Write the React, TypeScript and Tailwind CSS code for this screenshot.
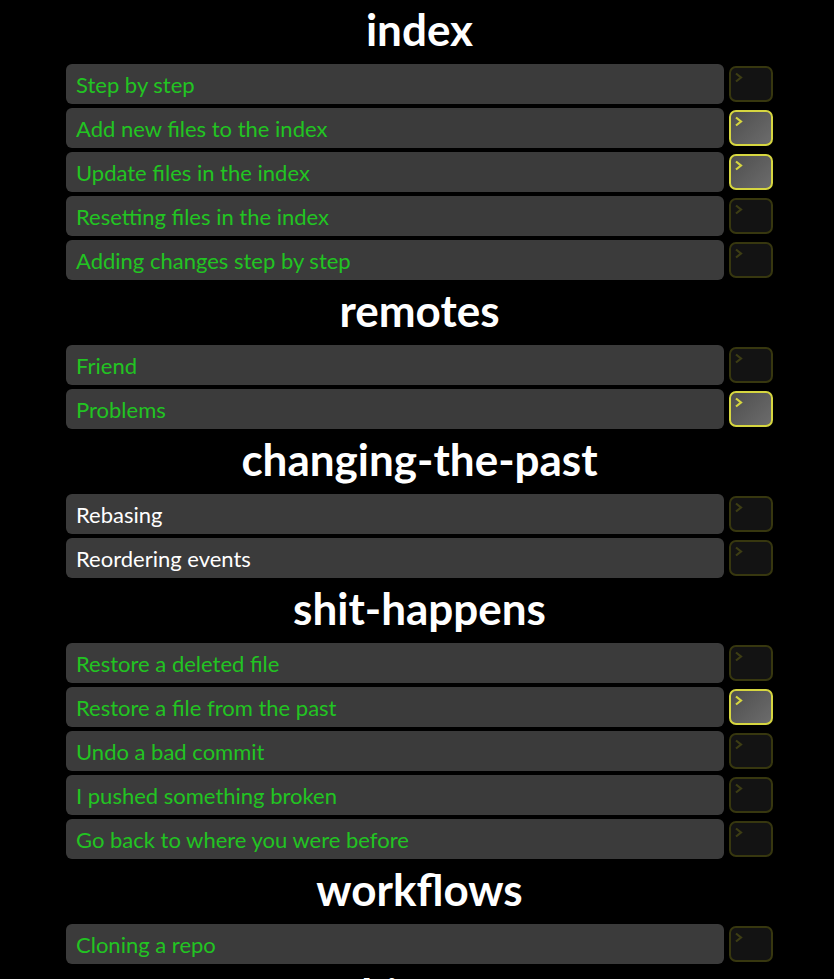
type Level = { title: string; done: boolean; active: boolean };
type Chapter = { name: string; levels: Level[] };

const CHAPTERS: Chapter[] = [
  {
    name: "index",
    levels: [
      { title: "Step by step", done: true, active: false },
      { title: "Add new files to the index", done: true, active: true },
      { title: "Update files in the index", done: true, active: true },
      { title: "Resetting files in the index", done: true, active: false },
      { title: "Adding changes step by step", done: true, active: false },
    ],
  },
  {
    name: "remotes",
    levels: [
      { title: "Friend", done: true, active: false },
      { title: "Problems", done: true, active: true },
    ],
  },
  {
    name: "changing-the-past",
    levels: [
      { title: "Rebasing", done: false, active: false },
      { title: "Reordering events", done: false, active: false },
    ],
  },
  {
    name: "shit-happens",
    levels: [
      { title: "Restore a deleted file", done: true, active: false },
      { title: "Restore a file from the past", done: true, active: true },
      { title: "Undo a bad commit", done: true, active: false },
      { title: "I pushed something broken", done: true, active: false },
      { title: "Go back to where you were before", done: true, active: false },
    ],
  },
  {
    name: "workflows",
    levels: [{ title: "Cloning a repo", done: true, active: false }],
  },
  {
    name: "bisect",
    levels: [{ title: "Yellow brick road", done: false, active: false }],
  },
];

function TerminalButton({ active }: { active: boolean }) {
  return (
    <button
      type="button"
      className={[
        "relative h-[36px] w-[44px] shrink-0 rounded-[7px] border-2",
        active
          ? "border-[#d6d640] bg-[linear-gradient(135deg,#4e4e4e,#6c6c6c)]"
          : "border-[#37370f] bg-[#131313]",
      ].join(" ")}
    >
      <svg
        viewBox="0 0 8 10"
        className="absolute left-[4px] top-[4px] h-[11px] w-[8px]"
        fill="none"
        stroke={active ? "#d6d640" : "#3d3d14"}
        strokeWidth="2.2"
      >
        <path d="M1 1 L6 5 L1 9" />
      </svg>
    </button>
  );
}

export default function App() {
  return (
    <div className="min-h-dvh overflow-hidden bg-black font-['Lato','Open_Sans',sans-serif]">
      <div className="-mt-px ml-[66px] flex w-[707px] flex-col">
        {CHAPTERS.map((c) => (
          <div key={c.name} className="flex flex-col gap-[4px]">
            <h2 className="flex h-[61px] items-center justify-center pb-[1px] text-[44px] font-bold text-white">
              {c.name}
            </h2>
            {c.levels.map((l) => (
              <div key={l.title} className="flex items-center gap-[5px]">
                <div
                  className={[
                    "flex h-[40px] flex-1 items-center rounded-[6px] bg-[#3b3b3b] pl-[10px] text-[22px]",
                    l.done ? "text-[#22c422]" : "text-white",
                  ].join(" ")}
                >
                  {l.title}
                </div>
                <TerminalButton active={l.active} />
              </div>
            ))}
          </div>
        ))}
      </div>
    </div>
  );
}
